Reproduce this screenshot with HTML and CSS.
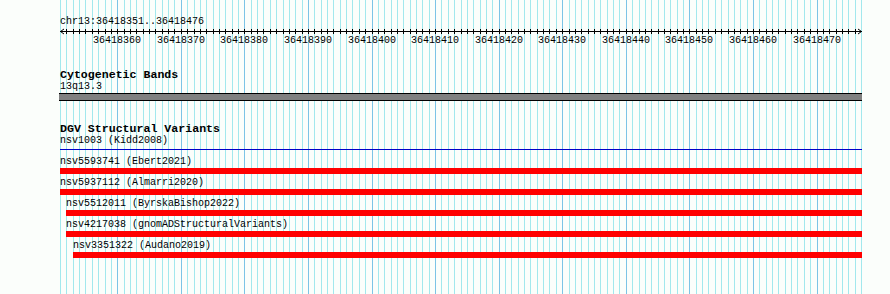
FILE: index.html
```html
<!DOCTYPE html>
<html lang="en">
<head>
    <meta charset="UTF-8" />
    <meta name="viewport" content="width=device-width, initial-scale=1.0" />
    <title>chr13:36418351..36418476</title>
    <link rel="stylesheet" href="styles.css">
</head>
<body>
    <div class="view" id="view">
        <svg class="grid" id="grid" aria-hidden="true"></svg>

        <div class="ruler">
            <div class="locus">chr13:36418351..36418476</div>
            <svg class="scale" id="scale" width="803" height="7" aria-hidden="true">
                <polyline class="arrow" points="4,1 0.5,3.5 4,6" />
                <polyline class="arrow" points="798,1 801.5,3.5 798,6" />
                <line class="axis" x1="0" y1="3.5" x2="802" y2="3.5" />
            </svg>
            <div class="scale-labels" id="scaleLabels"></div>
        </div>

        <section class="track">
            <h4 class="track-title">Cytogenetic Bands</h4>
            <div class="feature-label">13q13.3</div>
            <div class="band"></div>
        </section>

        <section class="track">
            <h4 class="track-title">DGV Structural Variants</h4>
            <div class="feature-label">nsv1003 (Kidd2008)</div>
            <div class="span-line"></div>

            <div class="variants">
                <div class="variant">
                    <div class="feature-label">nsv5593741 (Ebert2021)</div>
                    <div class="variant-bar"></div>
                </div>
                <div class="variant">
                    <div class="feature-label">nsv5937112 (Almarri2020)</div>
                    <div class="variant-bar"></div>
                </div>
                <div class="variant start-1">
                    <div class="feature-label">nsv5512011 (ByrskaBishop2022)</div>
                    <div class="variant-bar"></div>
                </div>
                <div class="variant start-1">
                    <div class="feature-label">nsv4217038 (gnomADStructuralVariants)</div>
                    <div class="variant-bar"></div>
                </div>
                <div class="variant start-2">
                    <div class="feature-label">nsv3351322 (Audano2019)</div>
                    <div class="variant-bar"></div>
                </div>
            </div>
        </section>
    </div>

    <script src="script.js"></script>
</body>
</html>
```

FILE: styles.css
```css
:root {
    --background-color: #fbfefb;
    --text-color: #000000;
    --grid-minor: #a2e8ed;
    --grid-major: #7cc4e6;
    --band-color: #808080;
    --variant-color: #ff0000;
    --line-color: #0000c8;
    --mono: "Liberation Mono", "DejaVu Sans Mono", monospace;
}

html,
body {
    margin: 0;
    padding: 0;
    height: 100%;
    overflow: hidden;
}

body {
    background-color: var(--background-color);
    color: var(--text-color);
    font-family: var(--mono);
    font-size: 10px;
    line-height: 12px;
}

.view {
    position: relative;
    margin-left: 60px;
    width: 802px;
    height: 294px;
}

.grid {
    position: absolute;
    top: 0;
    left: 0;
    width: 802px;
    height: 294px;
}

.gridline {
    stroke: var(--grid-minor);
    stroke-width: 1;
}

.gridline.major {
    stroke: var(--grid-major);
}

.ruler,
.track {
    position: relative;
}

.ruler {
    padding-top: 16px;
}

.locus {
    height: 12px;
    white-space: nowrap;
}

.scale {
    display: block;
    overflow: visible;
}

.scale .axis,
.scale .tick,
.scale .arrow {
    stroke: #000000;
    stroke-width: 1;
    fill: none;
}

.scale-labels {
    position: relative;
    height: 12px;
}

.scale-label {
    position: absolute;
    top: 0;
    width: 48px;
    text-align: center;
    white-space: nowrap;
}

.track {
    margin-top: 21px;
}

.track-title {
    margin: 0;
    font-size: 11.6px;
    line-height: 13px;
    font-weight: 700;
    white-space: nowrap;
}

.feature-label {
    height: 12px;
    white-space: nowrap;
}

.band {
    margin-left: -1px;
    height: 6px;
    background-color: var(--band-color);
    border-top: 1px solid #000000;
    border-bottom: 1px solid #000000;
}

.span-line {
    margin-top: 2px;
    height: 1px;
    background-color: var(--line-color);
}

.variants {
    display: flex;
    flex-direction: column;
    gap: 3px;
    margin-top: 6px;
}

.variant.start-1 {
    padding-left: 6px;
}

.variant.start-2 {
    padding-left: 13px;
}

.variant-bar {
    height: 6px;
    background-color: var(--variant-color);
}
```

FILE: script.js
```js
var START = 36418351;
var BASES = 126;
var STEP = 801 / BASES;
var NS = 'http://www.w3.org/2000/svg';

var grid = document.getElementById('grid');
var scale = document.getElementById('scale');
var labels = document.getElementById('scaleLabels');

function makeLine(x, y1, y2, cls) {
    var line = document.createElementNS(NS, 'line');
    line.setAttribute('x1', x);
    line.setAttribute('x2', x);
    line.setAttribute('y1', y1);
    line.setAttribute('y2', y2);
    line.setAttribute('class', cls);
    return line;
}

for (var i = 0; i <= BASES; i++) {
    var x = Math.round(i * STEP) + 0.5;
    var pos = START + i;
    var major = pos % 10 === 0;

    grid.appendChild(makeLine(x, 0, 294, major ? 'gridline major' : 'gridline'));

    if (i > 0 && i < BASES) {
        scale.appendChild(makeLine(x, 1, 6, 'tick'));
    }

    if (major) {
        var label = document.createElement('span');
        label.className = 'scale-label';
        label.textContent = pos;
        label.style.left = (Math.round(i * STEP) - 24) + 'px';
        labels.appendChild(label);
    }
}
```
